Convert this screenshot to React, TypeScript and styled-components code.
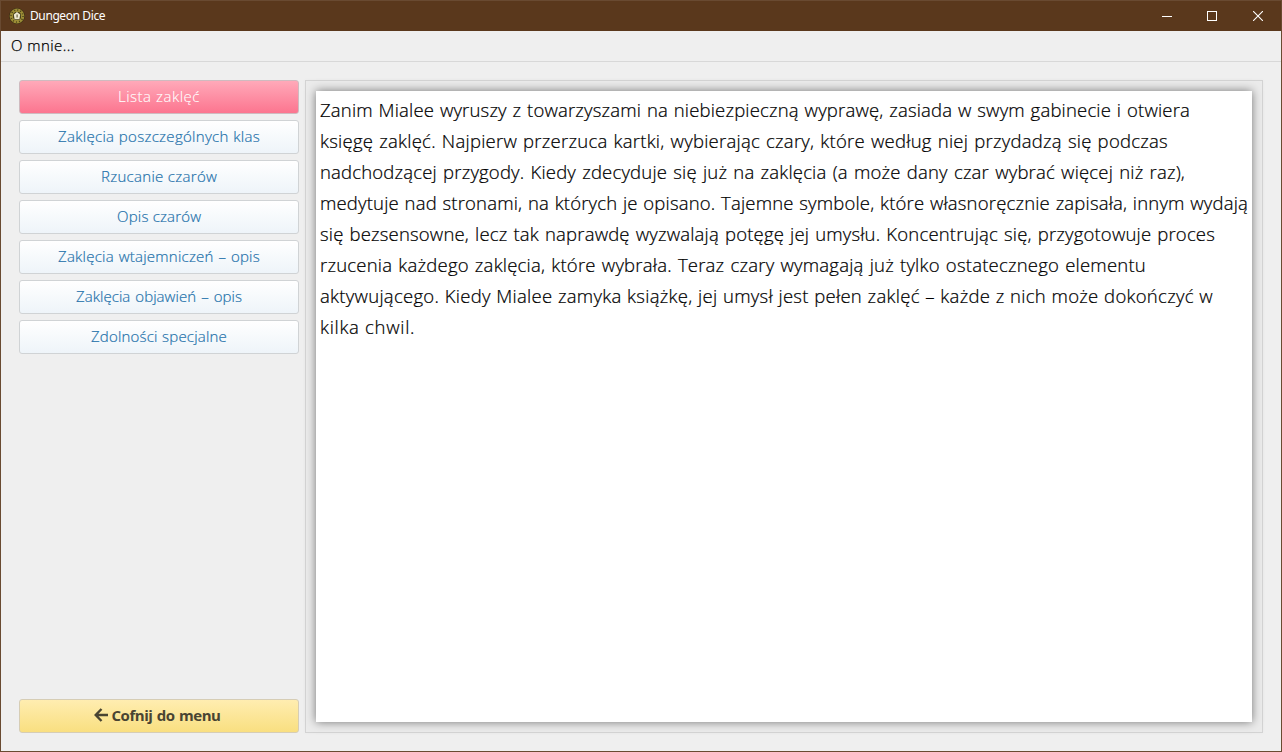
import React from "react";
import styled, { createGlobalStyle } from "styled-components";

const GlobalStyle = createGlobalStyle`
  *, *::before, *::after { box-sizing: border-box; }
  body { margin: 0; overflow: hidden; }
`;

const Window = styled.div`
  display: flex;
  flex-direction: column;
  width: 1282px;
  height: 752px;
  border: 1px solid #694a31;
  background: #efefef;
  font-family: "Open Sans", "Noto Sans", sans-serif;
  font-weight: 300;
`;

const TitleBar = styled.header`
  display: flex;
  align-items: center;
  height: 30px;
  flex: none;
  padding-left: 8px;
  background: #5a381c;
  color: #fff;
`;

const Title = styled.span`
  flex: 1;
  margin: -1px 0 0 5px;
  font-family: "Noto Sans", "Open Sans", sans-serif;
  font-size: 12px;
  font-weight: 400;
  letter-spacing: -0.4px;
`;

const WindowButton = styled.button`
  display: flex;
  align-items: center;
  justify-content: center;
  width: 46px;
  height: 30px;
  padding: 0;
  border: 0;
  background: none;
  color: #fff;
`;

const MenuBar = styled.nav`
  display: flex;
  align-items: center;
  height: 31px;
  flex: none;
  padding: 0 10px 3px;
  border-bottom: 1px solid #d8d8d8;
  color: #000;
`;

const MenuItem = styled.span`
  font-size: 15px;
  letter-spacing: 0.45px;
  -webkit-text-stroke: 0.25px currentColor;
`;

const Content = styled.main`
  display: flex;
  flex: 1;
  min-height: 0;
  gap: 6px;
  padding: 18px;
`;

const Sidebar = styled.aside`
  display: flex;
  flex-direction: column;
  gap: 6px;
  width: 280px;
  flex: none;
`;

const tones = {
  normal: { fill: "linear-gradient(#ffffff, #eef4f9)", ink: "#1f72ab", edge: "#d0d3d5", stroke: "0.2px" },
  active: { fill: "linear-gradient(#ffa9b9, #fc758f)", ink: "#fff", edge: "#cfbabf", stroke: "0.1px" },
  back: { fill: "linear-gradient(#ffedb0, #f9df80)", ink: "#494432", edge: "#d6cdb5", stroke: "0" },
};

const SideButton = styled.button<{ $tone: keyof typeof tones }>`
  display: flex;
  align-items: center;
  justify-content: center;
  gap: 4px;
  height: 34px;
  flex: none;
  padding: ${(p) => (p.$tone === "back" ? "0 4px 2px 0" : "0 0 2px")};
  border: 1px solid ${(p) => tones[p.$tone].edge};
  border-radius: 3px;
  background: ${(p) => tones[p.$tone].fill};
  color: ${(p) => tones[p.$tone].ink};
  font-family: inherit;
  font-size: 15px;
  font-weight: ${(p) => (p.$tone === "back" ? 700 : 300)};
  -webkit-text-stroke: ${(p) => tones[p.$tone].stroke} currentColor;
  margin-top: ${(p) => (p.$tone === "back" ? "auto" : "0")};
`;

const Label = styled.span<{ $width: number; $tracking: number }>`
  width: ${(p) => p.$width}px;
  letter-spacing: ${(p) => p.$tracking}px;
  white-space: nowrap;
  text-align: justify;
  text-align-last: justify;
`;

const Panel = styled.section`
  flex: 1;
  padding: 10px;
  border: 1px solid #d3d3d3;
  background: #ebebeb;
  box-shadow: 0 0 4px rgba(0, 0, 0, 0.03);
`;

const Page = styled.article`
  height: 100%;
  padding: 3px 4px;
  background: #fff;
  box-shadow: 0 0 9px rgba(0, 0, 0, 0.5);
  color: #000;
`;

const Line = styled.p<{ $width: number; $tracking?: number }>`
  width: ${(p) => p.$width}px;
  margin: 0;
  font-size: 18.5px;
  letter-spacing: ${(p) => p.$tracking ?? 0.18}px;
  line-height: 31px;
  white-space: nowrap;
  text-align: justify;
  text-align-last: justify;
  -webkit-text-stroke: 0.22px currentColor;
`;

const spells: [string, number, number][] = [
  ["Lista zaklęć", 82, 0.5],
  ["Zaklęcia poszczególnych klas", 202, 0.3],
  ["Rzucanie czarów", 116, 0.3],
  ["Opis czarów", 84, 0.2],
  ["Zaklęcia wtajemniczeń – opis", 202, 0.25],
  ["Zaklęcia objawień – opis", 166, 0.05],
  ["Zdolności specjalne", 136, 0.2],
];

const story: [string, number, number?][] = [
  ["Zanim Mialee wyruszy z towarzyszami na niebiezpieczną wyprawę, zasiada w swym gabinecie i otwiera", 870],
  ["księgę zaklęć. Najpierw przerzuca kartki, wybierając czary, które według niej przydadzą się podczas", 848, 0.25],
  ["nadchodzącej przygody. Kiedy zdecyduje się już na zaklęcia (a może dany czar wybrać więcej niż raz),", 865],
  ["medytuje nad stronami, na których je opisano. Tajemne symbole, które własnoręcznie zapisała, innym wydają", 928],
  ["się bezsensowne, lecz tak naprawdę wyzwalają potęgę jej umysłu. Koncentrując się, przygotowuje proces", 895],
  ["rzucenia każdego zaklęcia, które wybrała. Teraz czary wymagają już tylko ostatecznego elementu", 826, 0.22],
  ["aktywującego. Kiedy Mialee zamyka książkę, jej umysł jest pełen zaklęć – każde z nich może dokończyć w", 893, 0.28],
  ["kilka chwil.", 95, 0.7],
];

const AppIcon = () => (
  <svg width="16" height="16" viewBox="0 0 16 16">
    <circle cx="8" cy="8" r="7.8" fill="#29240f" />
    <circle cx="8" cy="8" r="5.7" fill="none" stroke="#9c8d36" strokeWidth="3.4" />
    <circle cx="8" cy="8" r="6" fill="none" stroke="#453d18" strokeWidth="1.6" strokeDasharray="0.9 2.2" />
    <circle cx="8" cy="8" r="4" fill="#4a421b" />
    <path d="M8 4 11.2 6.5 10.4 11.3H5.6L4.8 6.5Z" fill="#eee9d0" />
    <path d="M7.5 6.5h1.2v3H7.5z" fill="#6e6742" />
  </svg>
);

export default function App() {
  return (
    <>
      <GlobalStyle />
      <Window>
        <TitleBar>
          <AppIcon />
          <Title>Dungeon Dice</Title>
          <WindowButton aria-label="Minimize">
            <svg width="12" height="10" shapeRendering="crispEdges"><path d="M2 5.5h10" stroke="currentColor" /></svg>
          </WindowButton>
          <WindowButton aria-label="Maximize">
            <svg width="10" height="10" shapeRendering="crispEdges"><path d="M.5 .5h9v9h-9z" fill="none" stroke="currentColor" /></svg>
          </WindowButton>
          <WindowButton aria-label="Close">
            <svg width="10" height="10"><path d="M0 0 10 10M10 0 0 10" stroke="currentColor" strokeWidth="1.1" /></svg>
          </WindowButton>
        </TitleBar>
        <MenuBar>
          <MenuItem>O mnie...</MenuItem>
        </MenuBar>
        <Content>
          <Sidebar>
            {spells.map(([name, width, tracking], i) => (
              <SideButton key={name} $tone={i === 0 ? "active" : "normal"}>
                <Label $width={width} $tracking={tracking}>{name}</Label>
              </SideButton>
            ))}
            <SideButton $tone="back">
              <svg width="14" height="14" viewBox="0 0 14 14" fill="none" stroke="currentColor" strokeWidth="2.4">
                <path d="M7.5 1 1.7 7l5.8 6M2 7h12" />
              </svg>
              <Label $width={109} $tracking={-0.45}>Cofnij do menu</Label>
            </SideButton>
          </Sidebar>
          <Panel>
            <Page>
              {story.map(([text, width, tracking]) => (
                <Line key={text} $width={width} $tracking={tracking}>{text}</Line>
              ))}
            </Page>
          </Panel>
        </Content>
      </Window>
    </>
  );
}
